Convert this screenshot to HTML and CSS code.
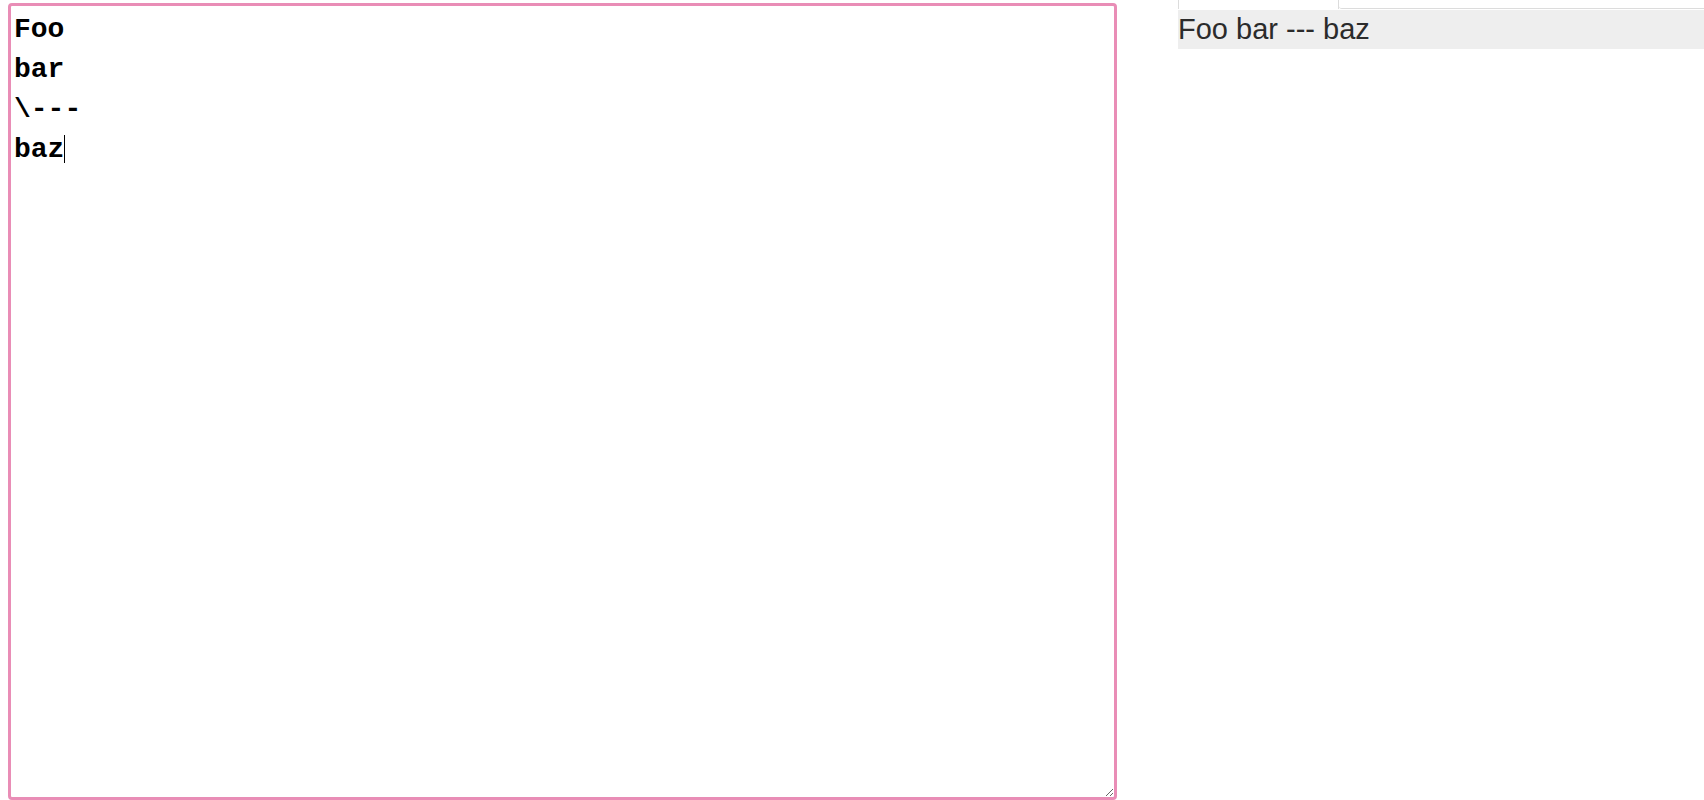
FILE: index.html
```html
<!DOCTYPE html>
<html>
<head>
<meta charset="utf-8">
<link rel="stylesheet" href="styles.css">
</head>
<body>
<div class="page">
  <div class="editor-col">
    <textarea class="editor" id="editor" autofocus spellcheck="false">Foo
bar
\---
baz</textarea>
    <span class="caret"></span>
  </div>
  <div class="preview-col">
    <div class="tabs">
      <div class="tab active"></div>
      <div class="tab-rest"></div>
    </div>
    <div class="preview">Foo bar --- baz</div>
  </div>
</div>
<script src="script.js"></script>
</body>
</html>
```

FILE: styles.css
```css
html, body {
  margin: 0;
  padding: 0;
  background: #fff;
  overflow: hidden;
}
.page {
  display: flex;
  align-items: flex-start;
  padding-left: 8px;
  margin-top: -30px;
}
.editor-col {
  position: relative;
  padding-top: 33px;
  flex: 0 0 auto;
}
.editor {
  display: block;
  box-sizing: border-box;
  width: 1109px;
  height: 797px;
  margin: 0;
  padding: 4px 3px 2px;
  border: 3px solid #e98db6;
  border-radius: 4px;
  outline: none;
  font-family: "Liberation Mono", monospace;
  font-weight: bold;
  font-size: 28px;
  line-height: 40px;
  color: #000;
  background: #fff;
  caret-color: transparent;
}
.caret {
  position: absolute;
  left: 56px;
  top: 165px;
  width: 1px;
  height: 28px;
  background: #000;
}
.preview-col {
  flex: 1;
  margin-left: 61px;
  display: flex;
  flex-direction: column;
}
.tabs {
  display: flex;
  height: 39px;
}
.tab {
  box-sizing: border-box;
  width: 161px;
  border: 1px solid #dcdcdc;
  border-bottom: none;
  background: #fff;
}
.tab-rest {
  flex: 1;
  border-bottom: 1px solid #dcdcdc;
  border-bottom-left-radius: 3px;
}
.preview {
  margin-top: 1px;
  background: #eeeeee;
  color: #2b2b2b;
  font-family: "Liberation Sans", Arial, sans-serif;
  font-size: 29px;
  line-height: 39px;
}
```

FILE: script.js
```js
var ed = document.getElementById('editor');
ed.focus();
var n = ed.value.length;
ed.setSelectionRange(n, n);
```
